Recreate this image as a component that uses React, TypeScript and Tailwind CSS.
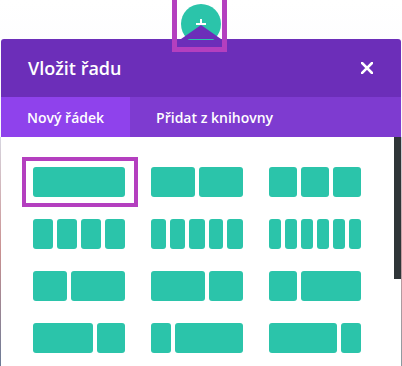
import React from "react";

type Row = number[][];

const groups: number[][] = [
  [92],
  [44, 44],
  [28, 28, 28],
  [20, 20, 20, 20],
  [15, 15, 16, 14, 16],
  [12, 12, 12, 12, 12, 12],
  [34, 54],
  [54, 34],
  [28, 60],
  [60, 28],
  [20, 68],
  [68, 20],
];

function Layout({ widths, selected }: { widths: number[]; selected?: boolean }) {
  return (
    <div className="relative flex h-[30px] w-[92px] gap-[4px]">
      {widths.map((w, i) => (
        <div key={i} className="h-full rounded-[3px] bg-[#2bc4aa]" style={{ width: w }} />
      ))}
      {selected && (
        <div className="absolute left-[-11px] top-[-10px] h-[50px] w-[116px] border-[4px] border-[#b43fbf]" />
      )}
    </div>
  );
}

export default function App() {
  return (
    <div
      className="relative h-[366px] w-[402px] overflow-hidden bg-gradient-to-b from-white to-[#eef1f8]"
      style={{ fontFamily: '"Open Sans", "Noto Sans", sans-serif' }}
    >
      <div className="h-[39px]" />
      <div className="absolute left-0 top-[137px] h-[229px] w-[1px] bg-gradient-to-b from-[#d6d6e0] via-[#c99090] to-[#6a7a96]" />
      <div className="absolute right-0 top-[137px] h-[229px] w-[1px] bg-gradient-to-b from-[#cfd5da] via-[#c79a9f] to-[#8a9aa0]" />
      <div className="mx-[1px] flex h-[327px] flex-col overflow-hidden rounded-t-[3px] bg-white">
        <div className="flex h-[58px] items-center justify-between bg-[#6c2eb9] pl-[27px] pr-[28px]">
          <span className="text-[18px] font-semibold text-white">Vložit řadu</span>
          <svg width="12" height="12" viewBox="0 0 12 12">
            <path d="M1 1 L11 11 M11 1 L1 11" stroke="white" strokeWidth="2.6" strokeLinecap="square" />
          </svg>
        </div>
        <div className="flex h-[40px] bg-[#7e3bd0] text-[14px] font-semibold text-white">
          <div className="flex items-center bg-[#8f42ec] px-[26px]">Nový řádek</div>
          <div className="flex items-center px-[26px]">Přidat z knihovny</div>
        </div>
        <div className="relative flex-1">
          <div className="grid grid-cols-[92px_92px_92px] gap-x-[26px] gap-y-[22px] pl-[32px] pt-[30px]">
            {groups.map((g, i) => (
              <Layout key={i} widths={g} selected={i === 0} />
            ))}
          </div>
          <div className="absolute right-0 top-0 h-[142px] w-[7px] bg-[#2f3538]" />
        </div>
      </div>
      <svg className="absolute left-[181px] top-[4px]" width="42" height="36" viewBox="0 0 42 36">
        <circle cx="20" cy="20" r="20" fill="#2bc4aa" />
        <path d="M15 20 H25 M20 15 V20" stroke="white" strokeWidth="2" />
        <polygon points="20,21 0,35 40,35" fill="#6c2eb9" />
      </svg>
      <div className="absolute left-[172px] top-[-6px] h-[58px] w-[55px] border-[5px] border-[#b43fbf]" />
    </div>
  );
}
